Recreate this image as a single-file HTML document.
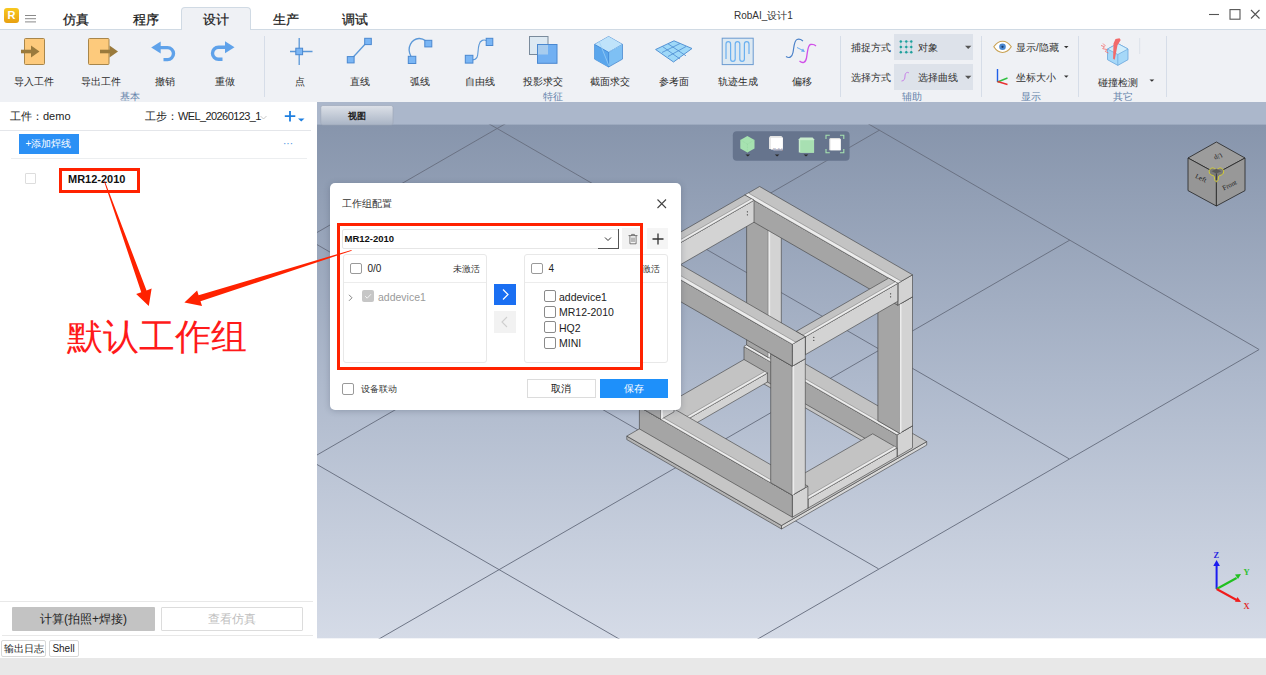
<!DOCTYPE html>
<html><head><meta charset="utf-8">
<style>
*{margin:0;padding:0;box-sizing:border-box}
html,body{width:1266px;height:675px;overflow:hidden;background:#fff;font-family:"Liberation Sans",sans-serif;color:#222}
.abs{position:absolute}
#title{left:0;top:0;width:1266px;height:30px;background:#fff;border-bottom:1px solid #d0dae4}
.tab{position:absolute;top:12.5px;font-size:12.5px;font-weight:500;color:#1a1a1a;line-height:15px;-webkit-text-stroke:0.25px #1a1a1a}
#acttab{left:181px;top:7px;width:70px;height:24px;background:#eff1f5;border:1px solid #d0dae4;border-bottom:none;border-radius:4px 4px 0 0}
#ribbon{left:0;top:30px;width:1266px;height:72px;background:#eff1f5}
.lbl{position:absolute;top:46px;font-size:10px;color:#2a2a2a;font-weight:500;white-space:nowrap;line-height:12px;transform:translateX(-50%)}
.grp{position:absolute;top:61px;font-size:10px;color:#6482aa;font-weight:500;white-space:nowrap;line-height:12px;transform:translateX(-50%)}
.sep{position:absolute;top:6px;width:1px;height:61px;background:#d6dde8}
#left{left:0;top:102px;width:317px;height:538px;background:#fff}
#view{left:317px;top:102px;width:949px;height:538px;overflow:hidden}
#bottom{left:0;top:640px;width:1266px;height:35px;background:#fff}
.dlg{font-size:10px}
</style></head><body>
<div id="title" class="abs">
  <div class="abs" style="left:4px;top:8px;width:15px;height:15px;border-radius:3px;background:linear-gradient(#f8c820,#e8a010);color:#fff;font-size:11px;font-weight:bold;text-align:center;line-height:15px">R</div>
  <div class="abs" style="left:25px;top:15px;width:11px;height:1.2px;background:#8a8a8a;box-shadow:0 3.2px 0 #8a8a8a,0 6.4px 0 #8a8a8a"></div>
  <div id="acttab" class="abs"></div>
  <div class="tab" style="left:63px">仿真</div>
  <div class="tab" style="left:133px">程序</div>
  <div class="tab" style="left:203px">设计</div>
  <div class="tab" style="left:273px">生产</div>
  <div class="tab" style="left:342px">调试</div>
  <div class="abs" style="left:734px;top:10px;font-size:10px;color:#333;line-height:12px">RobAI_设计1</div>
  <svg class="abs" style="left:1200px;top:5px" width="66" height="22" viewBox="0 0 66 22">
    <path d="M9 9.5h10" stroke="#555" stroke-width="1.1"/>
    <rect x="30" y="4.6" width="10" height="9.6" fill="none" stroke="#555" stroke-width="1.1"/>
    <path d="M51 5l8.5 8.5M59.5 5L51 13.5" stroke="#555" stroke-width="1.1"/>
  </svg>
</div>
<div id="ribbon" class="abs">
  <div class="lbl" style="left:33.5px">导入工件</div>
  <div class="lbl" style="left:101px">导出工件</div>
  <div class="lbl" style="left:164.5px">撤销</div>
  <div class="lbl" style="left:225px">重做</div>
  <div class="lbl" style="left:300px">点</div>
  <div class="lbl" style="left:360px">直线</div>
  <div class="lbl" style="left:420px">弧线</div>
  <div class="lbl" style="left:480px">自由线</div>
  <div class="lbl" style="left:543px">投影求交</div>
  <div class="lbl" style="left:610px">截面求交</div>
  <div class="lbl" style="left:674px">参考面</div>
  <div class="lbl" style="left:738px">轨迹生成</div>
  <div class="lbl" style="left:802px">偏移</div>
  <div class="grp" style="left:129.5px">基本</div>
  <div class="grp" style="left:552.5px">特征</div>
  <div class="grp" style="left:912px">辅助</div>
  <div class="grp" style="left:1030.5px">显示</div>
  <div class="grp" style="left:1123px">其它</div>
  <div class="sep" style="left:264px"></div>
  <div class="sep" style="left:840px"></div>
  <div class="sep" style="left:981px"></div>
  <div class="sep" style="left:1078px"></div>
  <div class="sep" style="left:1166px"></div>
  <div class="abs" style="left:851px;top:12px;font-size:10px;color:#333;line-height:12px">捕捉方式</div>
  <div class="abs" style="left:851px;top:42px;font-size:10px;color:#333;line-height:12px">选择方式</div>
  <div class="abs" style="left:894px;top:4px;width:79px;height:26px;background:#dde2ea"></div>
  <div class="abs" style="left:894px;top:34px;width:79px;height:26px;background:#dde2ea"></div>
  <div class="abs" style="left:918px;top:12px;font-size:10px;color:#333;line-height:12px">对象</div>
  <div class="abs" style="left:918px;top:42px;font-size:10px;color:#333;line-height:12px">选择曲线</div>
  <div class="abs" style="left:1016px;top:12px;font-size:10px;color:#333;line-height:12px">显示/隐藏</div>
  <div class="abs" style="left:1016px;top:42px;font-size:10px;color:#333;line-height:12px">坐标大小</div>
  <div class="abs" style="left:1098px;top:47px;font-size:10px;color:#333;line-height:12px">碰撞检测</div>
</div>
<svg class="abs" style="left:0;top:0" width="1266" height="102" viewBox="0 0 1266 102">
  <!-- import -->
  <rect x="24.5" y="38.5" width="20" height="26" rx="1" fill="#fdca7c" stroke="#a8864a" stroke-width="1"/>
  <path d="M21 51.5h11" stroke="#9a7a3c" stroke-width="3.6"/>
  <path d="M31 45.5l8.5 6-8.5 6z" fill="#9a7a3c"/>
  <!-- export -->
  <rect x="88.5" y="38.5" width="20.5" height="26" rx="1" fill="#fdca7c" stroke="#a8864a" stroke-width="1"/>
  <path d="M100 51.5h10" stroke="#9a7a3c" stroke-width="3.6"/>
  <path d="M109.5 45.5l8.5 6-8.5 6z" fill="#9a7a3c"/>
  <!-- undo -->
  <path d="M157 47.6h10.5a6 6 0 0 1 0 12h-4" fill="none" stroke="#5fa2ea" stroke-width="3.4"/>
  <path d="M151.2 47.6l9.5-6v12z" fill="#5fa2ea"/>
  <!-- redo -->
  <path d="M229 47.2h-10.5a6 6 0 0 0 0 12h4" fill="none" stroke="#5fa2ea" stroke-width="3.4"/>
  <path d="M234.5 47.2l-9.5-6v12z" fill="#5fa2ea"/>
  <!-- point -->
  <path d="M299.2 38v27M290 51.5h22.5" stroke="#5b98d8" stroke-width="1.3"/>
  <rect x="295.8" y="48.2" width="6.8" height="6.5" fill="#7ab6f5" stroke="#4a88d0" stroke-width="1"/>
  <!-- line -->
  <path d="M351 59.5L368 41" stroke="#5b98d8" stroke-width="1.3"/>
  <rect x="347.3" y="56.6" width="6.8" height="6.3" fill="#7ab6f5" stroke="#4a88d0" stroke-width="1"/>
  <rect x="364.7" y="38.3" width="6.6" height="6.3" fill="#7ab6f5" stroke="#4a88d0" stroke-width="1"/>
  <!-- arc -->
  <path d="M411 56.5C406 47 412 39 419 38.5C422 38.3 424 39.5 426 41" fill="none" stroke="#5b98d8" stroke-width="1.3"/>
  <rect x="408.3" y="56.3" width="7.5" height="7.2" fill="#7ab6f5" stroke="#4a88d0" stroke-width="1"/>
  <rect x="424.8" y="40.3" width="7" height="6.6" fill="#7ab6f5" stroke="#4a88d0" stroke-width="1"/>
  <!-- free line -->
  <path d="M472 60C480 60 477 51 479 45C480 40 484 39 487 41" fill="none" stroke="#5b98d8" stroke-width="1.1"/>
  <rect x="465.3" y="55.3" width="7.6" height="7.8" fill="#7ab6f5" stroke="#4a88d0" stroke-width="1"/>
  <rect x="486.2" y="38.3" width="6.6" height="7.2" fill="#7ab6f5" stroke="#4a88d0" stroke-width="1"/>
  <!-- projection -->
  <rect x="529.5" y="36.5" width="18.5" height="18" fill="#dde9f2" stroke="#7a8b9c" stroke-width="1"/>
  <rect x="537.5" y="44.5" width="19.5" height="18.8" fill="#72b0f2" stroke="#4a88d0" stroke-width="1"/>
  <path d="M538 45h10v9.5h-10z" fill="#a8ccee"/>
  <!-- section cube -->
  <path d="M608.6 36.5l13.9 7.9v14.7l-13.9 7.9-14-7.9V44.4z" fill="#7ec0f4" stroke="#4a8ad0" stroke-width="0.8"/>
  <path d="M594.6 44.4l14 7.9 13.9-7.9-13.9-7.9z" fill="#bfe3fa"/>
  <path d="M608.6 52.3v14.6l-14-7.8V44.4z" fill="#5aa6ec"/>
  <path d="M594.6 44.4l14 7.9 13.9-7.9M608.6 52.3v14.6" fill="none" stroke="#3c84d4" stroke-width="0.8"/>
  <path d="M599 41l10 25M622 45l-13 7" stroke="#9fd2f8" stroke-width="0.7"/>
  <!-- plane -->
  <path d="M655.6 49.5L674 40.8 692 48.5 673.5 62z" fill="#9ed8f8" stroke="#4a8ad0" stroke-width="0.9"/>
  <path d="M662 52.5l18-9M668 56.5l18-10M662.5 46.5L680 59M668 43.8l18 12" stroke="#4a8ad0" stroke-width="0.8"/>
  <!-- trajectory -->
  <rect x="722.2" y="38.2" width="31" height="26.4" fill="#dde9f2" stroke="#6a9ad0" stroke-width="1"/>
  <path d="M726 59V44a2.3 2.3 0 0 1 4.6 0v15a2.3 2.3 0 0 0 4.6 0V44a2.3 2.3 0 0 1 4.6 0v15a2.3 2.3 0 0 0 4.6 0V44a2.3 2.3 0 0 1 4.6 0v10" fill="none" stroke="#6ab0f0" stroke-width="1.2"/>
  <!-- offset -->
  <path d="M786 56.5c3 2 6 1 7-4s1-12 4-13 4 0 6 1.5" fill="none" stroke="#4a80c8" stroke-width="1.2"/>
  <path d="M799.5 61c3 2.5 6 2 7-3s1-13 4-13.5 4 0 5.5 1.5" fill="none" stroke="#d050e8" stroke-width="1.3"/>
  <path d="M797 47.5l6 3" stroke="#6aaaf0" stroke-width="1"/>
  <path d="M805 52l-4-0.5 2-3z" fill="#6aaaf0"/>
  <!-- dropdown arrows -->
  <path d="M965 45.8h6.4l-3.2 3.2z" fill="#555"/>
  <path d="M965 75.8h6.4l-3.2 3.2z" fill="#555"/>
  <path d="M1064 46h4.5l-2.25 2.2z" fill="#333"/>
  <path d="M1064 75.5h4.5l-2.25 2.2z" fill="#333"/>
  <path d="M1149.5 79.5h4.8l-2.4 2.3z" fill="#333"/>
  <!-- snap grid icon -->
  <g fill="#1a9e9a">
    <circle cx="900.8" cy="41.5" r="1.2"/><circle cx="906.3" cy="41.5" r="1.2"/><circle cx="911.3" cy="41.5" r="1.2"/>
    <circle cx="900.8" cy="47" r="1.2"/><circle cx="906.3" cy="47" r="1.2"/><circle cx="911.3" cy="47" r="1.2"/>
    <circle cx="900.8" cy="52.3" r="1.2"/><circle cx="906.3" cy="52.3" r="1.2"/><circle cx="911.3" cy="52.3" r="1.2"/>
  </g>
  <path d="M900.5 41.5h11M900.5 47h11M900.5 52.3h11M900.8 41.5v11M906.3 41.5v11M911.3 41.5v11" stroke="#2aa8a4" stroke-width="0.5" stroke-dasharray="1 1"/>
  <!-- select curve S -->
  <path d="M909 73c-2-1.5-4 0-4 3s-1 5-3.5 5" fill="none" stroke="#c880e8" stroke-width="1"/>
  <!-- eye -->
  <path d="M993.8 46.8c5-7.5 12.5-7.5 17.5 0c-5 7.5-12.5 7.5-17.5 0z" fill="#fff" stroke="#c8a050" stroke-width="1.1"/>
  <circle cx="1002.5" cy="46.8" r="3.3" fill="#4a88d0"/>
  <circle cx="1002.5" cy="46.8" r="1.1" fill="#1a3a6a"/>
  <!-- axis size -->
  <path d="M997.5 69v13" stroke="#2060e8" stroke-width="1.4"/>
  <path d="M997.5 82l10-4" stroke="#30c040" stroke-width="1.4"/>
  <path d="M997.5 81.5l10 3" stroke="#e83030" stroke-width="1.4"/>
  <!-- collision -->
  <path d="M1117.8 43.5L1128 49v10.7l-10.2 5.7-10.3-5.7V49z" fill="#a6d8f8" stroke="#6aa6dc" stroke-width="0.8"/>
  <path d="M1107.5 49l10.3 5.5 10.2-5.5-10.2-5.5z" fill="#d2eefc" stroke="#6aa6dc" stroke-width="0.7"/>
  <path d="M1117.8 54.5v10.9" stroke="#6aa6dc" stroke-width="0.7"/>
  <path d="M1113.5 43.5l2-4.5 4-0.8 1.2 1.8-3.2 5.2-2.8 14.5-1.6-1z" fill="#f26a6a"/>
  <path d="M1101 45.5l3.5 1.2-1.8 2 4.2 0.8-1.5 2 3 1.5M1103 43.5l2.5 2.5" stroke="#f26a6a" stroke-width="0.8" fill="none"/>
  <path d="M1139.7 38v16" stroke="#dde2ea" stroke-width="1"/>
</svg>
<div id="left" class="abs">
  <div class="abs" style="left:10px;top:8px;font-size:11px;color:#222;line-height:13px;white-space:nowrap">工件：demo</div>
  <div class="abs" style="left:145px;top:8px;font-size:11px;color:#222;line-height:13px;white-space:nowrap">工步：<span style="letter-spacing:-0.6px">WEL_20260123_1</span></div>
  <svg class="abs" style="left:258px;top:8px" width="50" height="16" viewBox="258 110 50 16">
    <path d="M260.5 116l3 3 3-3" fill="none" stroke="#bbb" stroke-width="0.8"/>
    <path d="M290 111v10.5M284.8 116.2h10.5" stroke="#1e7fe0" stroke-width="1.8"/>
    <path d="M298 118.5h6.5l-3.25 3z" fill="#1e7fe0"/>
  </svg>
  <div class="abs" style="left:0;top:27.5px;width:311px;height:1px;background:#e4e6ea"></div>
  <div class="abs" style="left:18.5px;top:32px;width:60px;height:19.5px;background:#2b90f5;color:#fff;font-size:10px;line-height:19.5px;text-align:center">+添加焊线</div>
  <div class="abs" style="left:283px;top:36px;font-size:10px;color:#4a90e0;line-height:12px">···</div>
  <div class="abs" style="left:10.5px;top:55.5px;width:296px;height:1px;background:#eceef0"></div>
  <div class="abs" style="left:24.5px;top:71px;width:11px;height:11px;border:1px solid #ddd;border-radius:1px"></div>
  <div class="abs" style="left:68px;top:71px;font-size:11px;font-weight:bold;color:#111;line-height:13px">MR12-2010</div>
  <div class="abs" style="left:0;top:499px;width:313px;height:1px;background:#e8e8e8"></div>
  <div class="abs" style="left:12px;top:504.8px;width:143px;height:24px;background:#c3c3c3;border-radius:1px;font-size:12px;color:#222;line-height:24px;text-align:center">计算(拍照+焊接)</div>
  <div class="abs" style="left:161px;top:504.5px;width:142px;height:24.5px;border:1px solid #dcdcdc;border-radius:1px;font-size:12px;color:#c0c0c0;line-height:22.5px;text-align:center">查看仿真</div>
  <div class="abs" style="left:2px;top:533px;width:311px;height:1px;background:#e8e8e8"></div>
</div>
<div id="bottom" class="abs">
  <div class="abs" style="left:1px;top:0;width:45px;height:17px;border:1px solid #d8d8d8;border-radius:2px;font-size:10px;color:#222;line-height:15px;text-align:center">输出日志</div>
  <div class="abs" style="left:48.5px;top:0;width:30px;height:17px;border:1px solid #d8d8d8;border-radius:2px;font-size:10px;color:#222;line-height:15px;text-align:center">Shell</div>
  <div class="abs" style="left:0;top:17.7px;width:1266px;height:18px;background:#e8e8e8"></div>
</div>
<div id="view" class="abs">
<svg class="abs" style="left:0;top:0" width="949" height="538" viewBox="317 102 949 538">
<defs><linearGradient id="bg" x1="0" y1="0" x2="0" y2="1">
<stop offset="0" stop-color="#8795ac"/><stop offset="0.5" stop-color="#aeb9cc"/><stop offset="1" stop-color="#d5dbe7"/></linearGradient></defs>
<rect x="317" y="102" width="949" height="23" fill="#abb7cb"/>
<rect x="317" y="124.6" width="949" height="514" fill="url(#bg)"/>
<rect x="317" y="638.5" width="949" height="2" fill="#fff"/>
<svg x="317" y="124.6" width="949" height="514" viewBox="317 124.6 949 514">
<g stroke="#687081" stroke-width="0.95"><line x1="317.0" y1="-194.5" x2="1258.8" y2="349.3"/><line x1="317.0" y1="24.5" x2="1069.1" y2="458.8"/><line x1="317.0" y1="244.6" x2="878.5" y2="568.8"/><line x1="317.0" y1="464.5" x2="688.1" y2="678.8"/><line x1="317.0" y1="232.5" x2="686.8" y2="19.0"/><line x1="317.0" y1="455.0" x2="879.4" y2="130.2"/><line x1="317.0" y1="674.8" x2="1069.8" y2="240.1"/><line x1="317.0" y1="893.5" x2="1259.2" y2="349.5"/></g>
<polygon points="926.7,441.6 781.5,525.5 781.5,529.0 926.7,445.1" fill="#d8d8d8" stroke="#3c3c3c" stroke-width="0.6" stroke-linejoin="round"/>
<polygon points="626.8,436.1 781.5,525.5 781.5,529.0 626.8,439.6" fill="#b4b4b4" stroke="#3c3c3c" stroke-width="0.6" stroke-linejoin="round"/>
<path d="M772.1 352.3 L926.7 441.6 L781.5 525.5 L626.8 436.1Z M759.6 381.5 L874.4 447.8 L792.3 495.2 L677.5 428.9Z" fill="#c6c6c6" fill-rule="evenodd" stroke="#3c3c3c" stroke-width="0.6"/>
<polygon points="912.5,425.8 897.0,434.8 897.0,456.8 912.5,447.8" fill="#d3d3d3" stroke="#3c3c3c" stroke-width="0.6" stroke-linejoin="round"/>
<polygon points="744.0,346.5 897.0,434.8 897.0,456.8 744.0,368.5" fill="#a5a5a5" stroke="#3c3c3c" stroke-width="0.6" stroke-linejoin="round"/>
<polygon points="759.6,337.5 912.5,425.8 897.0,434.8 744.0,346.5" fill="#c3c3c3" stroke="#3c3c3c" stroke-width="0.6" stroke-linejoin="round"/>
<polygon points="746.6,345.0 899.5,433.3 897.0,434.8 744.0,346.5" fill="#ececec" stroke="#555" stroke-width="0.4" stroke-linejoin="round"/>
<polygon points="767.4,373.0 678.4,424.4 678.4,433.4 767.4,382.0" fill="#d3d3d3" stroke="#3c3c3c" stroke-width="0.6" stroke-linejoin="round"/>
<polygon points="655.0,410.9 678.4,424.4 678.4,433.4 655.0,419.9" fill="#a5a5a5" stroke="#3c3c3c" stroke-width="0.6" stroke-linejoin="round"/>
<polygon points="744.0,359.5 767.4,373.0 678.4,424.4 655.0,410.9" fill="#c3c3c3" stroke="#3c3c3c" stroke-width="0.6" stroke-linejoin="round"/>
<polygon points="764.8,371.5 767.4,373.0 678.4,424.4 675.8,422.9" fill="#ececec" stroke="#555" stroke-width="0.4" stroke-linejoin="round"/>
<polygon points="781.3,221.0 768.3,228.5 768.3,357.5 781.3,350.0" fill="#d3d3d3" stroke="#3c3c3c" stroke-width="0.6" stroke-linejoin="round"/>
<polygon points="746.6,216.0 768.3,228.5 768.3,357.5 746.6,345.0" fill="#a5a5a5" stroke="#3c3c3c" stroke-width="0.6" stroke-linejoin="round"/>
<polygon points="759.6,208.5 781.3,221.0 768.3,228.5 746.6,216.0" fill="#c3c3c3" stroke="#3c3c3c" stroke-width="0.6" stroke-linejoin="round"/>
<polygon points="768.3,228.5 770.2,227.4 770.2,356.4 768.3,357.5" fill="#ececec"/>
<polygon points="912.5,296.8 899.5,304.3 899.5,433.3 912.5,425.8" fill="#d3d3d3" stroke="#3c3c3c" stroke-width="0.6" stroke-linejoin="round"/>
<polygon points="877.9,291.8 899.5,304.3 899.5,433.3 877.9,420.8" fill="#a5a5a5" stroke="#3c3c3c" stroke-width="0.6" stroke-linejoin="round"/>
<polygon points="890.9,284.3 912.5,296.8 899.5,304.3 877.9,291.8" fill="#c3c3c3" stroke="#3c3c3c" stroke-width="0.6" stroke-linejoin="round"/>
<polygon points="899.5,304.3 901.5,303.2 901.5,432.2 899.5,433.3" fill="#ececec"/>
<polygon points="897.0,447.8 807.9,499.2 807.9,508.2 897.0,456.8" fill="#d3d3d3" stroke="#3c3c3c" stroke-width="0.6" stroke-linejoin="round"/>
<polygon points="783.7,485.2 807.9,499.2 807.9,508.2 783.7,494.2" fill="#a5a5a5" stroke="#3c3c3c" stroke-width="0.6" stroke-linejoin="round"/>
<polygon points="872.7,433.8 897.0,447.8 807.9,499.2 783.7,485.2" fill="#c3c3c3" stroke="#3c3c3c" stroke-width="0.6" stroke-linejoin="round"/>
<polygon points="894.4,446.3 897.0,447.8 807.9,499.2 805.3,497.7" fill="#ececec" stroke="#555" stroke-width="0.4" stroke-linejoin="round"/>
<polygon points="807.9,486.2 792.3,495.2 792.3,517.2 807.9,508.2" fill="#d3d3d3" stroke="#3c3c3c" stroke-width="0.6" stroke-linejoin="round"/>
<polygon points="639.4,406.9 792.3,495.2 792.3,517.2 639.4,428.9" fill="#a5a5a5" stroke="#3c3c3c" stroke-width="0.6" stroke-linejoin="round"/>
<polygon points="655.0,397.9 807.9,486.2 792.3,495.2 639.4,406.9" fill="#c3c3c3" stroke="#3c3c3c" stroke-width="0.6" stroke-linejoin="round"/>
<polygon points="642.0,405.4 794.9,493.7 792.3,495.2 639.4,406.9" fill="#ececec" stroke="#555" stroke-width="0.4" stroke-linejoin="round"/>
<polygon points="674.0,282.9 661.0,290.4 661.0,419.4 674.0,411.9" fill="#d3d3d3" stroke="#3c3c3c" stroke-width="0.6" stroke-linejoin="round"/>
<polygon points="639.4,277.9 661.0,290.4 661.0,419.4 639.4,406.9" fill="#a5a5a5" stroke="#3c3c3c" stroke-width="0.6" stroke-linejoin="round"/>
<polygon points="652.4,270.4 674.0,282.9 661.0,290.4 639.4,277.9" fill="#c3c3c3" stroke="#3c3c3c" stroke-width="0.6" stroke-linejoin="round"/>
<polygon points="661.0,290.4 663.0,289.3 663.0,418.3 661.0,419.4" fill="#ececec"/>
<polygon points="912.5,274.8 897.8,283.3 897.8,305.3 912.5,296.8" fill="#d3d3d3" stroke="#3c3c3c" stroke-width="0.6" stroke-linejoin="round"/>
<polygon points="744.9,195.0 897.8,283.3 897.8,305.3 744.9,217.0" fill="#a5a5a5" stroke="#3c3c3c" stroke-width="0.6" stroke-linejoin="round"/>
<polygon points="759.6,186.5 912.5,274.8 897.8,283.3 744.9,195.0" fill="#c3c3c3" stroke="#3c3c3c" stroke-width="0.6" stroke-linejoin="round"/>
<polygon points="748.3,193.0 901.3,281.3 897.8,283.3 744.9,195.0" fill="#ececec" stroke="#555" stroke-width="0.4" stroke-linejoin="round"/>
<polygon points="754.0,200.2 648.5,261.1 648.5,283.1 754.0,222.2" fill="#d3d3d3" stroke="#3c3c3c" stroke-width="0.6" stroke-linejoin="round"/>
<polygon points="639.4,255.9 648.5,261.1 648.5,283.1 639.4,277.9" fill="#a5a5a5" stroke="#3c3c3c" stroke-width="0.6" stroke-linejoin="round"/>
<polygon points="744.9,195.0 754.0,200.2 648.5,261.1 639.4,255.9" fill="#c3c3c3" stroke="#3c3c3c" stroke-width="0.6" stroke-linejoin="round"/>
<polygon points="751.4,198.8 754.0,200.2 648.5,261.1 645.9,259.6" fill="#ececec" stroke="#555" stroke-width="0.4" stroke-linejoin="round"/>
<polygon points="805.3,358.7 792.3,366.2 792.3,495.2 805.3,487.7" fill="#d3d3d3" stroke="#3c3c3c" stroke-width="0.6" stroke-linejoin="round"/>
<polygon points="770.7,353.7 792.3,366.2 792.3,495.2 770.7,482.7" fill="#a5a5a5" stroke="#3c3c3c" stroke-width="0.6" stroke-linejoin="round"/>
<polygon points="783.7,346.2 805.3,358.7 792.3,366.2 770.7,353.7" fill="#c3c3c3" stroke="#3c3c3c" stroke-width="0.6" stroke-linejoin="round"/>
<polygon points="792.3,366.2 794.2,365.1 794.2,494.1 792.3,495.2" fill="#ececec"/>
<polygon points="897.8,283.3 805.3,336.7 805.3,354.7 897.8,301.3" fill="#d3d3d3" stroke="#3c3c3c" stroke-width="0.6" stroke-linejoin="round"/>
<polygon points="796.2,331.4 805.3,336.7 805.3,354.7 796.2,349.4" fill="#a5a5a5" stroke="#3c3c3c" stroke-width="0.6" stroke-linejoin="round"/>
<polygon points="888.7,278.1 897.8,283.3 805.3,336.7 796.2,331.4" fill="#c3c3c3" stroke="#3c3c3c" stroke-width="0.6" stroke-linejoin="round"/>
<polygon points="895.2,281.8 897.8,283.3 805.3,336.7 802.7,335.2" fill="#ececec" stroke="#555" stroke-width="0.4" stroke-linejoin="round"/>
<polygon points="805.3,336.7 792.3,344.2 792.3,366.2 805.3,358.7" fill="#d3d3d3" stroke="#3c3c3c" stroke-width="0.6" stroke-linejoin="round"/>
<polygon points="639.4,255.9 792.3,344.2 792.3,366.2 639.4,277.9" fill="#a5a5a5" stroke="#3c3c3c" stroke-width="0.6" stroke-linejoin="round"/>
<polygon points="652.4,248.4 805.3,336.7 792.3,344.2 639.4,255.9" fill="#c3c3c3" stroke="#3c3c3c" stroke-width="0.6" stroke-linejoin="round"/>
<polygon points="642.9,253.9 795.8,342.2 792.3,344.2 639.4,255.9" fill="#ececec" stroke="#555" stroke-width="0.4" stroke-linejoin="round"/>
<circle cx="747.4" cy="211.8" r="0.65" fill="#333"/><circle cx="747.4" cy="214.8" r="0.65" fill="#333"/>
<circle cx="813.8" cy="337.3" r="0.65" fill="#333"/><circle cx="813.8" cy="340.3" r="0.65" fill="#333"/>
<circle cx="890.6" cy="293.8" r="0.65" fill="#333"/><circle cx="890.6" cy="296.8" r="0.65" fill="#333"/>
</svg>
<!-- view tab -->
<defs><linearGradient id="tabg" x1="0" y1="0" x2="0" y2="1"><stop offset="0" stop-color="#dde1e8"/><stop offset="1" stop-color="#a9b4c5"/></linearGradient></defs>
<rect x="320.8" y="105.5" width="72.2" height="19.5" rx="2" fill="url(#tabg)" stroke="#9aa4b6" stroke-width="0.6"/>
<text x="357" y="119" font-size="9" font-weight="bold" fill="#222" text-anchor="middle" font-family="Liberation Sans, sans-serif">视图</text>
<!-- toolbar pill -->
<rect x="732.8" y="131.2" width="116.8" height="29.6" rx="4" fill="#66748d"/>
<path d="M747.4 136l7.1 4v8.6l-7.1 4-7.1-4V140z" fill="#a6e2b0"/>
<path d="M740.3 140l7.1 4 7.1-4M747.4 144v8.6" fill="none" stroke="#8ccc98" stroke-width="0.5" stroke-dasharray="0.8 0.8"/>
<path d="M745.5 154.6h4.6l-2.3 2z" fill="#2a2a2a"/>
<path d="M769 137.5l1.4-1.4h11l1.4 1.4v11.5h-13.8z" fill="#e4e4e4"/>
<rect x="770.8" y="137.8" width="12" height="11.8" fill="#fff"/>
<text x="773" y="150.5" font-family="Liberation Sans, sans-serif" font-size="4.2" fill="#dde" stroke="#889" stroke-width="0.2">Solid</text>
<path d="M774.8 154.6h4.6l-2.3 2z" fill="#2a2a2a"/>
<path d="M798.8 139.2l1.6-1.6h12.2l1.5 1.6v13.2h-15.3z" fill="#c8eccd"/>
<rect x="800.2" y="140.2" width="13.8" height="12.6" fill="#a8e0b2"/>
<path d="M803.7 154.6h4.6l-2.3 2z" fill="#2a2a2a"/>
<path d="M826 139v-3.8h3.8M840 135.2h3.8v3.8M843.8 149v3.8H840M829.8 152.8H826V149" fill="none" stroke="#a6e2b0" stroke-width="1.1"/>
<path d="M829.2 139l1.2-1.1h9.2l1.1 1.1v11.3h-11.5z" fill="#dcdcdc"/>
<rect x="830.4" y="139.2" width="10.3" height="11.1" fill="#fff"/>
<!-- nav cube -->
<g stroke="#222" stroke-width="0.8" stroke-linejoin="round">
<path d="M1216.4 142L1245 158L1216.4 173.5L1188 158z" fill="#9c9c9c"/>
<path d="M1188 158L1216.4 173.5V206L1188 190.6z" fill="#969696"/>
<path d="M1245 158L1216.4 173.5V206L1245 190.6z" fill="#989898"/>
</g>
<path d="M1216.4 173.5m-7.2-1.8c0-3 3-4.5 5-3.2c1.2 0.8 1.5 1 2.2 1c0.7 0 1-0.2 2.2-1c2-1.3 5 0.2 5 3.2c0 2.2-1.5 3.2-3.8 3.8c-1.2 0.4-1.4 1-1.4 2.5c0 2.5-1.5 3.8-2 3.8s-2-1.3-2-3.8c0-1.5-0.2-2.1-1.4-2.5c-2.3-0.6-3.8-1.6-3.8-3.8z" fill="#7a7a7a" stroke="#e8e020" stroke-width="0.8"/>
<path d="M1211.5 171.2l4.9 2.3 4.9-2.3-4.9-2.5z" fill="#5a5a5a"/>
<path d="M1216.4 173.5v6.5" stroke="#333" stroke-width="0.9"/>
<g font-family="Liberation Serif, serif" font-size="7" fill="#222">
<text x="1210.5" y="158.5" transform="rotate(152 1216.5 157)">Up</text>
<text x="1194" y="181" transform="rotate(24 1202 181)">Left</text>
<text x="1221" y="187" transform="rotate(-26 1230 183)">Front</text>
</g>
<!-- axis triad -->
<g stroke-width="2">
<path d="M1216.6 589V565" stroke="#1c1cf0"/>
<path d="M1216.6 589l20-11" stroke="#20c020"/>
<path d="M1216.6 589l20 11" stroke="#f01c1c"/>
</g>
<path d="M1213.3 566l3.3-6 3.3 6z" fill="#1c1cf0"/>
<path d="M1235 574.5l6-0.5-3 5z" fill="#20c020"/>
<path d="M1237.5 597l3.5 5-6-0.3z" fill="#f01c1c"/>
<g font-family="Liberation Serif, serif" font-size="8.5" font-weight="bold">
<text x="1213.5" y="558" fill="#2828e0">Z</text>
<text x="1243.5" y="575" fill="#30c030">Y</text>
<text x="1243.5" y="609" fill="#e03030">X</text>
</g>

</svg>
</div>
<div class="abs dlg" style="left:329.5px;top:182.5px;width:351px;height:227px;background:#fff;border-radius:5px;box-shadow:0 1px 6px rgba(40,50,70,0.25)">
  <div class="abs" style="left:12px;top:15px;font-size:10px;color:#333;line-height:12px">工作组配置</div>
  <svg class="abs" style="left:326px;top:15px" width="12" height="12" viewBox="0 0 12 12"><path d="M1.5 1.5l8.5 8.5M10 1.5L1.5 10" stroke="#444" stroke-width="1.1"/></svg>
  <div class="abs" style="left:12px;top:46px;width:277px;height:20.5px;border:1px solid #e6e6e6;border-radius:2px"></div>
  <div class="abs" style="left:15px;top:50px;font-size:9.5px;font-weight:bold;color:#111;line-height:12px">MR12-2010</div>
  <div class="abs" style="left:268px;top:46px;width:21px;height:20.5px;border-right:1.2px solid #555;border-bottom:1.2px solid #555"></div>
  <svg class="abs" style="left:273px;top:52px" width="10" height="8" viewBox="0 0 10 8"><path d="M2 2.5l3 3 3-3" fill="none" stroke="#333" stroke-width="1"/></svg>
  <div class="abs" style="left:292.5px;top:45.5px;width:20px;height:21px;background:#f2f2f2"></div>
  <svg class="abs" style="left:297px;top:50px" width="12" height="12" viewBox="0 0 12 12"><path d="M1.5 2.6h9M4.6 2.6V1.4h2.8v1.2M2.9 2.6v8.2h6.2V2.6M5 4.6v4.4M7 4.6v4.4" fill="none" stroke="#555" stroke-width="0.75"/></svg>
  <div class="abs" style="left:317px;top:45.5px;width:21.5px;height:21px;background:#f5f5f5"></div>
  <svg class="abs" style="left:321px;top:49px" width="14" height="14" viewBox="0 0 14 14"><path d="M7 1.5v11M1.5 7h11" stroke="#333" stroke-width="1.3"/></svg>
  <!-- left list -->
  <div class="abs" style="left:13px;top:71px;width:144px;height:109px;border:1px solid #e8e8e8;border-radius:3px"></div>
  <div class="abs" style="left:14px;top:99px;width:142px;height:1px;background:#ececec"></div>
  <div class="abs" style="left:20px;top:80px;width:12.4px;height:11.6px;border:1px solid #9a9a9a;border-radius:2px"></div>
  <div class="abs" style="left:38px;top:80px;font-size:10px;color:#222;line-height:12px">0/0</div>
  <div class="abs" style="left:123px;top:80.5px;font-size:9px;color:#333;line-height:12px">未激活</div>
  <svg class="abs" style="left:17px;top:110px" width="8" height="10" viewBox="0 0 8 10"><path d="M2 1.8l3 3-3 3" fill="none" stroke="#777" stroke-width="0.9"/></svg>
  <div class="abs" style="left:32.5px;top:107.5px;width:12px;height:12.4px;background:#c6c6c6;border-radius:2px"></div>
  <svg class="abs" style="left:32.5px;top:107.5px" width="12" height="12" viewBox="0 0 12 12"><path d="M3.2 6.2l2 2 3.8-4" fill="none" stroke="#f4f4f4" stroke-width="1"/></svg>
  <div class="abs" style="left:48.5px;top:108.5px;font-size:10.5px;color:#9a9a9a;line-height:12px">addevice1</div>
  <!-- arrows -->
  <div class="abs" style="left:164.5px;top:101.5px;width:22px;height:21px;background:#1a6ff2"></div>
  <svg class="abs" style="left:164.5px;top:101.5px" width="22" height="21" viewBox="0 0 22 21"><path d="M9 5.5l5 5-5 5" fill="none" stroke="#fff" stroke-width="1.2"/></svg>
  <div class="abs" style="left:164.5px;top:128.5px;width:22px;height:22px;background:#f2f2f2"></div>
  <svg class="abs" style="left:164.5px;top:128.5px" width="22" height="22" viewBox="0 0 22 22"><path d="M13 6l-5 5 5 5" fill="none" stroke="#cfcfcf" stroke-width="1.1"/></svg>
  <!-- right list -->
  <div class="abs" style="left:194px;top:71px;width:144.5px;height:109px;border:1px solid #e8e8e8;border-radius:3px"></div>
  <div class="abs" style="left:195px;top:99px;width:142px;height:1px;background:#ececec"></div>
  <div class="abs" style="left:201.5px;top:80px;width:12.4px;height:11.6px;border:1px solid #9a9a9a;border-radius:2px"></div>
  <div class="abs" style="left:219px;top:80px;font-size:10px;color:#222;line-height:12px">4</div>
  <div class="abs" style="left:312px;top:80.5px;font-size:9px;color:#333;line-height:12px">激活</div>
  <div class="abs" style="left:214px;top:107.8px;width:12px;height:12px;border:1px solid #8a8a8a;border-radius:2px"></div>
  <div class="abs" style="left:214px;top:123.5px;width:12px;height:12px;border:1px solid #8a8a8a;border-radius:2px"></div>
  <div class="abs" style="left:214px;top:138.6px;width:12px;height:12px;border:1px solid #8a8a8a;border-radius:2px"></div>
  <div class="abs" style="left:214px;top:154.2px;width:12px;height:12px;border:1px solid #8a8a8a;border-radius:2px"></div>
  <div class="abs" style="left:229.5px;top:108.3px;font-size:10.5px;color:#222;line-height:12px">addevice1</div>
  <div class="abs" style="left:229.5px;top:123.8px;font-size:10.5px;color:#222;line-height:12px">MR12-2010</div>
  <div class="abs" style="left:229.5px;top:139px;font-size:10.5px;color:#222;line-height:12px">HQ2</div>
  <div class="abs" style="left:229.5px;top:154.5px;font-size:10.5px;color:#222;line-height:12px">MINI</div>
  <!-- footer -->
  <div class="abs" style="left:12px;top:200px;width:12.5px;height:12px;border:1px solid #9a9a9a;border-radius:2px"></div>
  <div class="abs" style="left:31px;top:201px;font-size:8.5px;color:#333;line-height:11px">设备联动</div>
  <div class="abs" style="left:197.5px;top:196px;width:68.5px;height:19px;border:1px solid #dcdcdc;font-size:10px;color:#222;line-height:17px;text-align:center">取消</div>
  <div class="abs" style="left:270px;top:196px;width:68px;height:19px;background:#1e90fa;font-size:10px;color:#fff;line-height:19px;text-align:center">保存</div>
</div>
<div class="abs" style="left:59.1px;top:167.5px;width:81px;height:25px;border:3.3px solid #ff2200"></div>
<div class="abs" style="left:336.8px;top:222.85px;width:306.2px;height:147.2px;border:3.25px solid #ff2200"></div>
<svg class="abs" style="left:0;top:0" width="700" height="420" viewBox="0 0 700 420">
  <path d="M104.88 181.17L146.54 290.41L151.62 288.6L148.8 305.9L136.18 294.1L141.26 292.29L104.12 181.43z" fill="#ff2200"/>
  <path d="M351.48 249.92L198.6 295.2L197.1 290.5L184.4 302.4L202 306L200.5 301.3L351.72 250.68z" fill="#ff2200"/>
</svg>
<div class="abs" style="left:67px;top:316px;font-size:35.5px;color:#ff1a1a;line-height:42px;white-space:nowrap;letter-spacing:0">默认工作组</div>
</body></html>
